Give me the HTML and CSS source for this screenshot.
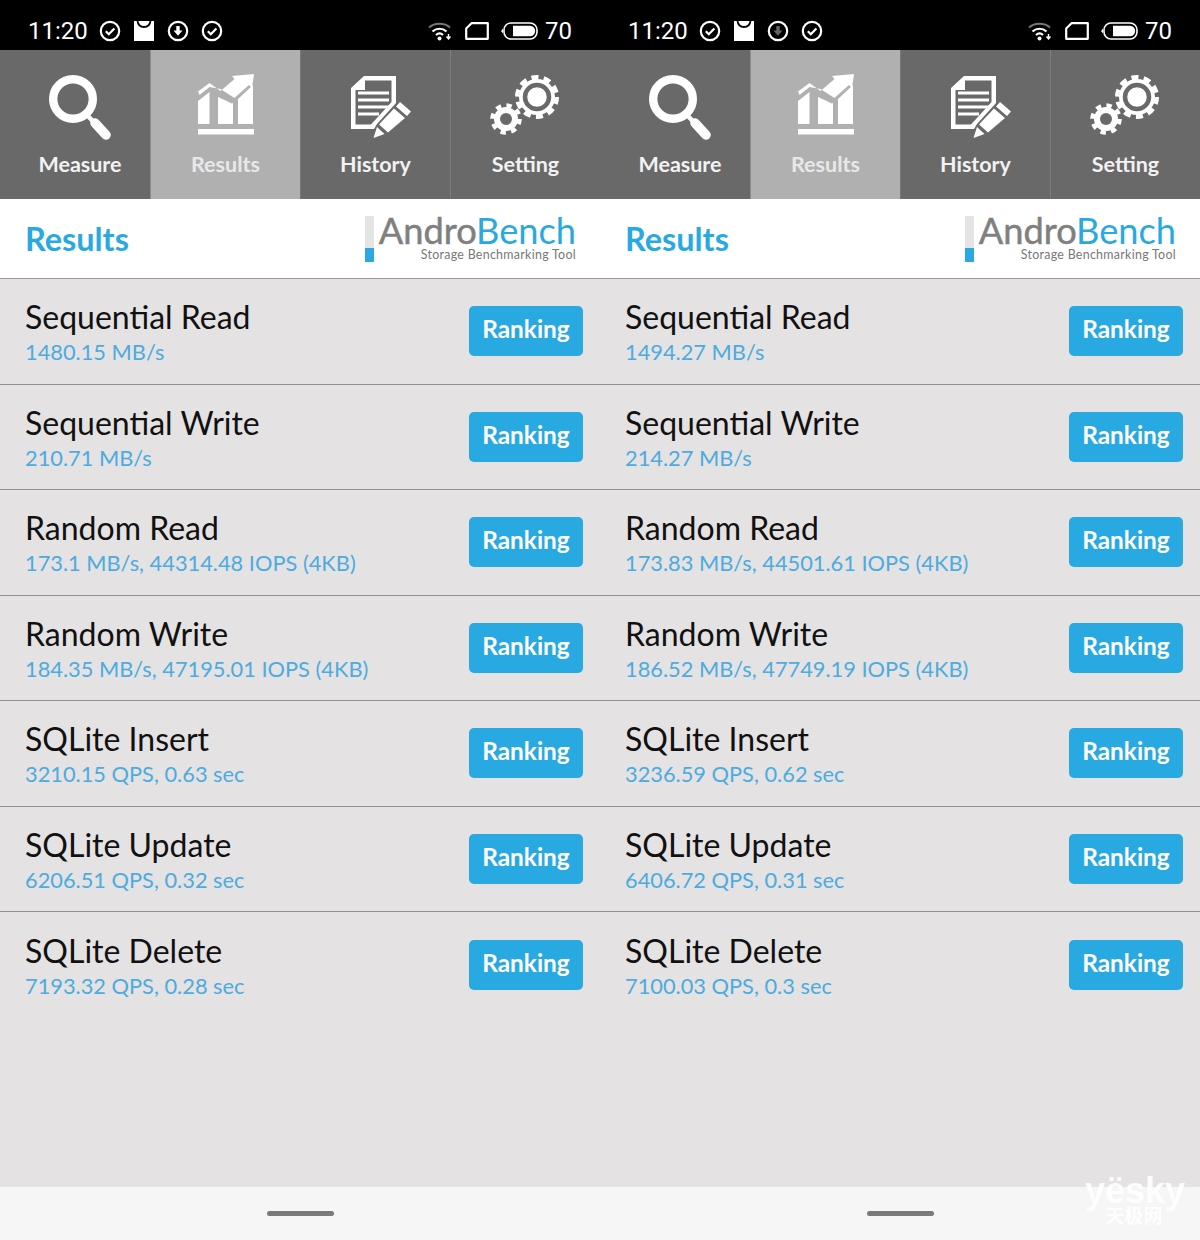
FILE: index.html
```html
<!DOCTYPE html>
<html>
<head>
    <meta charset="UTF-8">
    <title>AndroBench Results</title>
    <link rel="stylesheet" href="styles.css">
</head>
<body>
<svg class="defs" width="0" height="0">
    <symbol id="i-check" viewBox="0 0 22 22">
        <circle cx="11" cy="11" r="9.2" fill="none" stroke="#fff" stroke-width="2.2"/>
        <path d="M6.8 11.2l3 3 5.6-5.8" fill="none" stroke="#fff" stroke-width="2.2"/>
    </symbol>
    <symbol id="i-mail" viewBox="0 0 20 20">
        <rect width="20" height="20" fill="#fff"/>
        <path d="M3.500 0c.6 4 3 6 6.500 6s5.900-2 6.500-6" fill="none" stroke="#000" stroke-width="1.800"/>
    </symbol>
    <symbol id="i-wifi" viewBox="0 0 24 20">
        <path d="M1 6.500C6.500 1.500 16.500 1.500 22 6.500" fill="none" stroke="#777" stroke-width="2"/>
        <path d="M4.500 10.500C8.500 6.800 14.500 6.800 18.500 10.500M8 14c2.200-2 5-2 7 0" fill="none" stroke="#fff" stroke-width="2.200"/>
        <circle cx="11.500" cy="17.500" r="2" fill="#fff"/>
        <path d="M20.500 13v4M18.500 15.500l2 2.500 2-2.500" fill="none" stroke="#fff" stroke-width="1.400"/>
    </symbol>
    <symbol id="i-sim" viewBox="0 0 24 18">
        <path d="M6.500 1.200H22.800V16.800H1.200V6.500z" fill="none" stroke="#fff" stroke-width="2.200" stroke-linejoin="round"/>
    </symbol>
    <symbol id="i-battery" viewBox="0 0 37 18">
        <rect x="3" y="1" width="33" height="16" rx="7" fill="none" stroke="#fff" stroke-width="1.600"/>
        <path d="M0 9l2-2.500v5z" fill="#fff"/>
        <path d="M12 3.800h17a5.200 5.200 0 0 1 0 10.400H12z" fill="#fff"/>
    </symbol>
    <symbol id="i-search" viewBox="0 0 62 66">
        <circle cx="24" cy="24" r="19.800" fill="none" stroke="#fff" stroke-width="8.400"/>
        <path d="M38 40l8 8.500" fill="none" stroke="#fff" stroke-width="4.500"/>
        <path d="M46 48l11 12" fill="none" stroke="#fff" stroke-width="9.500" stroke-linecap="round"/>
    </symbol>
    <symbol id="i-chart" viewBox="0 0 56 62">
        <path d="M0 17.500L11.500 9l11 8 14-12-2.500-3L56 0l-2 14-3-3-14.500 13-14-9L11.500 13 1.500 21z" fill="#fff"/>
        <path d="M0 27l11.500-9V50H0zM20 23l14 6.500 1-1V50H20zM40 25l15-14v39H40z" fill="#fff"/>
        <rect x="0" y="55" width="56" height="5.500" fill="#fff"/>
    </symbol>
    <symbol id="i-doc" viewBox="0 0 62 64">
        <path d="M14 1h32v27L27 49l-3 5H1V13z" fill="#fff"/>
        <path d="M15 5.500V15H5.500v34.500H21L41.500 27V5.500z" fill="#696969"/>
        <path d="M8 18h31M8 25h31M8 32h31M8 39h21" stroke="#fff" stroke-width="3.200"/>
        <path d="M50 27l11 9.500-4 4.500-11-9.500zM44 33.500l11 9.500-17 14.500-9-8z" fill="#fff"/>
        <path d="M27 52l7.500 7-11 4z" fill="#fff"/>
    </symbol>
    <symbol id="i-gears" viewBox="0 0 72 64">
        <circle cx="47" cy="23" r="18" fill="#fff"/>
        <circle cx="47" cy="23" r="19.500" fill="none" stroke="#fff" stroke-width="5" stroke-dasharray="7 5.250"/>
        <circle cx="47" cy="23" r="12" fill="none" stroke="#696969" stroke-width="4.500"/>
        <circle cx="16" cy="45" r="12" fill="#fff"/>
        <circle cx="16" cy="45" r="13.500" fill="none" stroke="#fff" stroke-width="4.500" stroke-dasharray="5.300 5.300"/>
        <circle cx="16" cy="45" r="6" fill="#696969"/>
    </symbol>
</svg>

<div class="shots">
    <div class="screen">
        <div class="status">
            <span class="clock">11:20</span>
            <svg class="ic-round"><use href="#i-check"/></svg>
            <svg class="ic-mail"><use href="#i-mail"/></svg>
            <svg class="ic-round" viewBox="0 0 22 22">
                <circle cx="11" cy="11" r="9.200" fill="none" stroke="#fff" stroke-width="2.200"/>
                <path d="M9.300 6h3.400v4.500H15.500L11 15.800 6.500 10.500h2.800z" fill="#fff"/>
            </svg>
            <svg class="ic-round"><use href="#i-check"/></svg>
            <span class="spacer"></span>
            <svg class="ic-wifi"><use href="#i-wifi"/></svg>
            <svg class="ic-sim"><use href="#i-sim"/></svg>
            <svg class="ic-battery"><use href="#i-battery"/></svg>
            <span class="level">70</span>
        </div>
        <div class="tabs">
            <div class="tab first">
                <svg class="ic-search"><use href="#i-search"/></svg>
                <span>Measure</span>
            </div>
            <div class="tab active">
                <svg class="ic-chart"><use href="#i-chart"/></svg>
                <span>Results</span>
            </div>
            <div class="tab">
                <svg class="ic-doc"><use href="#i-doc"/></svg>
                <span>History</span>
            </div>
            <div class="tab">
                <svg class="ic-gears"><use href="#i-gears"/></svg>
                <span>Setting</span>
            </div>
        </div>
        <div class="head">
            <h1>Results</h1>
            <div class="logo">
                <div class="logo-bar"></div>
                <div class="logo-text">
                    <div class="logo-name">Andro<em>Bench</em></div>
                    <div class="logo-sub">Storage Benchmarking Tool</div>
                </div>
            </div>
        </div>
        <ul class="list">
            <li><div class="info"><h2>Sequential Read</h2><p>1480.15 MB/s</p></div><a class="rank">Ranking</a></li>
            <li><div class="info"><h2>Sequential Write</h2><p>210.71 MB/s</p></div><a class="rank">Ranking</a></li>
            <li><div class="info"><h2>Random Read</h2><p>173.1 MB/s, 44314.48 IOPS (4KB)</p></div><a class="rank">Ranking</a></li>
            <li><div class="info"><h2>Random Write</h2><p>184.35 MB/s, 47195.01 IOPS (4KB)</p></div><a class="rank">Ranking</a></li>
            <li><div class="info"><h2>SQLite Insert</h2><p>3210.15 QPS, 0.63 sec</p></div><a class="rank">Ranking</a></li>
            <li><div class="info"><h2>SQLite Update</h2><p>6206.51 QPS, 0.32 sec</p></div><a class="rank">Ranking</a></li>
            <li><div class="info"><h2>SQLite Delete</h2><p>7193.32 QPS, 0.28 sec</p></div><a class="rank">Ranking</a></li>
        </ul>
        <div class="navbar"><span class="handle"></span></div>
    </div>

    <div class="screen">
        <div class="status">
            <span class="clock">11:20</span>
            <svg class="ic-round"><use href="#i-check"/></svg>
            <svg class="ic-mail"><use href="#i-mail"/></svg>
            <svg class="ic-round" viewBox="0 0 22 22">
                <circle cx="11" cy="11" r="9.200" fill="none" stroke="#fff" stroke-width="2.200"/>
                <path d="M9.300 6h3.400v4.500H15.500L11 15.800 6.500 10.500h2.800z" fill="#666"/>
            </svg>
            <svg class="ic-round"><use href="#i-check"/></svg>
            <span class="spacer"></span>
            <svg class="ic-wifi"><use href="#i-wifi"/></svg>
            <svg class="ic-sim"><use href="#i-sim"/></svg>
            <svg class="ic-battery"><use href="#i-battery"/></svg>
            <span class="level">70</span>
        </div>
        <div class="tabs">
            <div class="tab first">
                <svg class="ic-search"><use href="#i-search"/></svg>
                <span>Measure</span>
            </div>
            <div class="tab active">
                <svg class="ic-chart"><use href="#i-chart"/></svg>
                <span>Results</span>
            </div>
            <div class="tab">
                <svg class="ic-doc"><use href="#i-doc"/></svg>
                <span>History</span>
            </div>
            <div class="tab">
                <svg class="ic-gears"><use href="#i-gears"/></svg>
                <span>Setting</span>
            </div>
        </div>
        <div class="head">
            <h1>Results</h1>
            <div class="logo">
                <div class="logo-bar"></div>
                <div class="logo-text">
                    <div class="logo-name">Andro<em>Bench</em></div>
                    <div class="logo-sub">Storage Benchmarking Tool</div>
                </div>
            </div>
        </div>
        <ul class="list">
            <li><div class="info"><h2>Sequential Read</h2><p>1494.27 MB/s</p></div><a class="rank">Ranking</a></li>
            <li><div class="info"><h2>Sequential Write</h2><p>214.27 MB/s</p></div><a class="rank">Ranking</a></li>
            <li><div class="info"><h2>Random Read</h2><p>173.83 MB/s, 44501.61 IOPS (4KB)</p></div><a class="rank">Ranking</a></li>
            <li><div class="info"><h2>Random Write</h2><p>186.52 MB/s, 47749.19 IOPS (4KB)</p></div><a class="rank">Ranking</a></li>
            <li><div class="info"><h2>SQLite Insert</h2><p>3236.59 QPS, 0.62 sec</p></div><a class="rank">Ranking</a></li>
            <li><div class="info"><h2>SQLite Update</h2><p>6406.72 QPS, 0.31 sec</p></div><a class="rank">Ranking</a></li>
            <li><div class="info"><h2>SQLite Delete</h2><p>7100.03 QPS, 0.3 sec</p></div><a class="rank">Ranking</a></li>
        </ul>
        <div class="navbar"><span class="handle"></span></div>
    </div>
</div>
<div class="mark">
    <div class="mark-en">yësky</div>
    <div class="mark-cn">天极网</div>
</div>
</body>
</html>
```

FILE: styles.css
```css
* {
    margin: 0;
    padding: 0;
    box-sizing: border-box;
    list-style: none;
}
html, body {
    width: 1200px;
    height: 1240px;
    overflow: hidden;
}
body {
    position: relative;
    font-family: "Lato", "Noto Sans", sans-serif;
}
.defs {
    display: block;
    height: 0;
}
.shots {
    display: flex;
    width: 1200px;
    height: 1240px;
}
.screen {
    width: 600px;
    height: 1240px;
    display: flex;
    flex-direction: column;
    background: #e4e2e3;
}

/* status bar */
.status {
    height: 50px;
    background: #000;
    display: flex;
    align-items: center;
    padding: 12px 29px 0 28px;
    color: #fff;
    font-family: "Roboto", sans-serif;
    font-size: 24px;
}
.clock {
    width: 59px;
    margin-right: 12px;
}
.spacer {
    flex: 1;
}
.ic-round {
    width: 22px;
    height: 22px;
}
.ic-mail {
    width: 20px;
    height: 20px;
    margin: 0 13px;
}
.ic-round + .ic-round {
    margin-left: 12px;
}
.ic-wifi {
    width: 24px;
    height: 20px;
}
.ic-sim {
    width: 24px;
    height: 18px;
    margin-left: 13px;
}
.ic-battery {
    width: 37px;
    height: 18px;
    margin-left: 12px;
}
.level {
    width: 26px;
    margin-left: 7px;
}

/* top tabs */
.tabs {
    height: 149px;
    display: flex;
    background: #696969;
}
.tab {
    width: 150px;
    height: 149px;
    display: flex;
    flex-direction: column;
    align-items: center;
    color: #f2f2f2;
    font-size: 21.5px;
    font-weight: 700;
}
.tab.first {
    padding-left: 10px;
}
.tab span {
    margin-top: auto;
    margin-bottom: 22px;
}
.tab + .tab {
    border-left: 1px solid #7d7d7d;
}
.tab.active {
    background: #b0b0b0;
    color: #e8e8e8;
    border-left-color: #8c8c8c;
}
.tab.active + .tab {
    border-left-color: #777;
}
.ic-search {
    width: 62px;
    height: 66px;
    margin-top: 25px;
}
.ic-chart {
    width: 56px;
    height: 62px;
    margin-top: 24px;
}
.ic-doc {
    width: 62px;
    height: 64px;
    margin: 25px 0 0 10px;
}
.ic-gears {
    width: 72px;
    height: 64px;
    margin-top: 24px;
}

/* results header */
.head {
    height: 80px;
    background: #fff;
    border-bottom: 1px solid #9a9a9a;
    display: flex;
    align-items: center;
    justify-content: space-between;
    padding: 0 24px 0 25px;
}
.head h1 {
    font-size: 32.4px;
    font-weight: 700;
    color: #29a9e1;
}
.logo {
    display: flex;
    align-items: stretch;
    height: 46px;
    gap: 5px;
}
.logo-bar {
    width: 9px;
    background: linear-gradient(#e4e4e4 0, #e4e4e4 32px, #29a9e1 32px);
}
.logo-name {
    font-size: 36.2px;
    line-height: 28px;
    margin-bottom: 4px;
    color: #808080;
    font-weight: 400;
    -webkit-text-stroke: 0.5px #808080;
}
.logo-name em {
    font-style: normal;
    color: #29a9e1;
    -webkit-text-stroke: 0;
}
.logo-sub {
    font-size: 12.4px;
    line-height: 14px;
    color: #777;
    text-align: right;
    letter-spacing: 0.3px;
}

/* list */
.list {
    flex: 1;
}
.list li {
    height: 105.5px;
    border-bottom: 1px solid #8f8f8f;
    display: flex;
    align-items: center;
    justify-content: space-between;
    padding: 0 17px 0 25px;
}
.list li:last-child {
    border-bottom: none;
}
.info {
    padding-top: 4px;
}
.list h2 {
    font-size: 32px;
    line-height: 38px;
    font-weight: 400;
    color: #111;
}
.list p {
    font-size: 21.8px;
    line-height: 32px;
    color: #4cabdf;
}
.rank {
    width: 114px;
    height: 50px;
    line-height: 45px;
    border-radius: 5px;
    background: #29a9e1;
    color: #fff;
    font-size: 24.4px;
    font-weight: 700;
    text-align: center;
}

/* bottom bar */
.navbar {
    height: 53px;
    background: #f6f6f6;
    display: flex;
    align-items: center;
    justify-content: center;
}
.handle {
    width: 67px;
    height: 5px;
    border-radius: 3px;
    background: #7a7a7a;
}

/* watermark over the screenshot corner */
.mark {
    position: absolute;
    right: 17px;
    bottom: 16px;
    width: 98px;
    color: #fff;
    opacity: 0.92;
    text-align: center;
    font-weight: 700;
}
.mark-en {
    font-family: "Liberation Sans", sans-serif;
    font-size: 36px;
    line-height: 30px;
}
.mark-cn {
    font-family: "Noto Sans CJK SC", sans-serif;
    font-size: 19px;
    line-height: 18px;
}
```
